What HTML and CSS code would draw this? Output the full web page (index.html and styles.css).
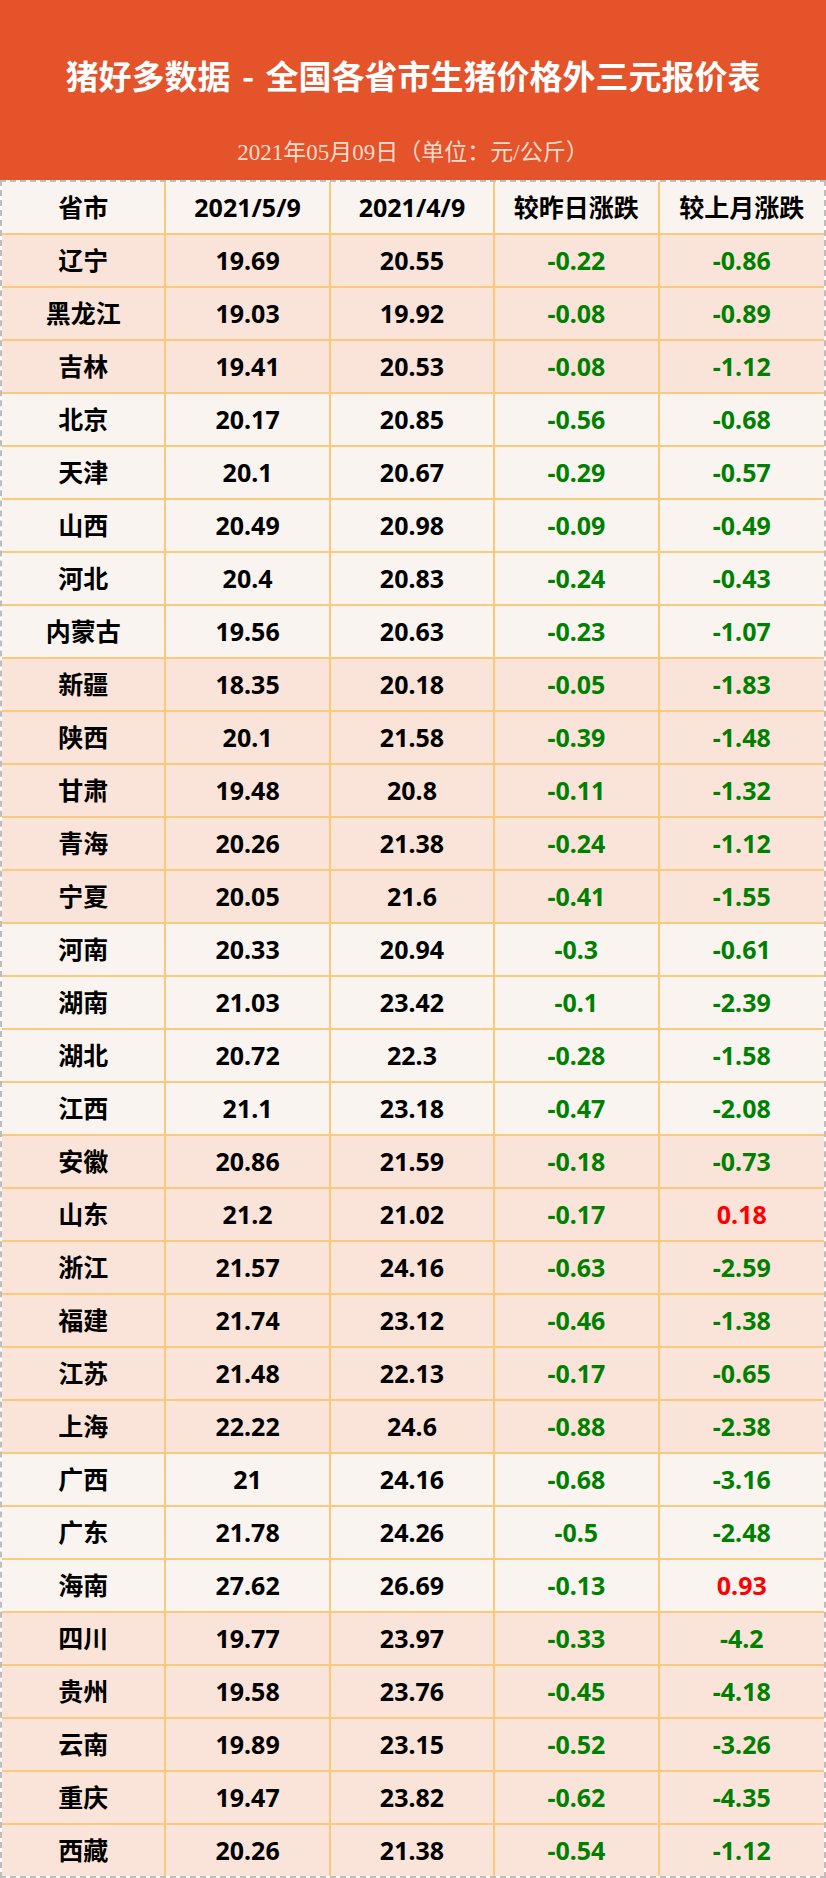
FILE: index.html
```html
<!DOCTYPE html>
<html lang="zh-CN">
<head>
<meta charset="utf-8">
<title>猪好多数据 - 全国各省市生猪价格外三元报价表</title>
<link rel="stylesheet" href="styles.css">
</head>
<body>
<header class="banner">
  <h1 class="title">猪好多数据 - 全国各省市生猪价格外三元报价表</h1>
  <p class="subtitle">2021年05月09日（单位：元/公斤）</p>
</header>
<table class="prices">
  <colgroup><col><col><col><col><col></colgroup>
  <thead>
    <tr class="light"><th>省市</th><th>2021/5/9</th><th>2021/4/9</th><th>较昨日涨跌</th><th>较上月涨跌</th></tr>
  </thead>
  <tbody>
    <tr class="peach"><td>辽宁</td><td>19.69</td><td>20.55</td><td class="down">-0.22</td><td class="down">-0.86</td></tr>
    <tr class="peach"><td>黑龙江</td><td>19.03</td><td>19.92</td><td class="down">-0.08</td><td class="down">-0.89</td></tr>
    <tr class="peach"><td>吉林</td><td>19.41</td><td>20.53</td><td class="down">-0.08</td><td class="down">-1.12</td></tr>
    <tr class="light"><td>北京</td><td>20.17</td><td>20.85</td><td class="down">-0.56</td><td class="down">-0.68</td></tr>
    <tr class="light"><td>天津</td><td>20.1</td><td>20.67</td><td class="down">-0.29</td><td class="down">-0.57</td></tr>
    <tr class="light"><td>山西</td><td>20.49</td><td>20.98</td><td class="down">-0.09</td><td class="down">-0.49</td></tr>
    <tr class="light"><td>河北</td><td>20.4</td><td>20.83</td><td class="down">-0.24</td><td class="down">-0.43</td></tr>
    <tr class="light"><td>内蒙古</td><td>19.56</td><td>20.63</td><td class="down">-0.23</td><td class="down">-1.07</td></tr>
    <tr class="peach"><td>新疆</td><td>18.35</td><td>20.18</td><td class="down">-0.05</td><td class="down">-1.83</td></tr>
    <tr class="peach"><td>陕西</td><td>20.1</td><td>21.58</td><td class="down">-0.39</td><td class="down">-1.48</td></tr>
    <tr class="peach"><td>甘肃</td><td>19.48</td><td>20.8</td><td class="down">-0.11</td><td class="down">-1.32</td></tr>
    <tr class="peach"><td>青海</td><td>20.26</td><td>21.38</td><td class="down">-0.24</td><td class="down">-1.12</td></tr>
    <tr class="peach"><td>宁夏</td><td>20.05</td><td>21.6</td><td class="down">-0.41</td><td class="down">-1.55</td></tr>
    <tr class="light"><td>河南</td><td>20.33</td><td>20.94</td><td class="down">-0.3</td><td class="down">-0.61</td></tr>
    <tr class="light"><td>湖南</td><td>21.03</td><td>23.42</td><td class="down">-0.1</td><td class="down">-2.39</td></tr>
    <tr class="light"><td>湖北</td><td>20.72</td><td>22.3</td><td class="down">-0.28</td><td class="down">-1.58</td></tr>
    <tr class="light"><td>江西</td><td>21.1</td><td>23.18</td><td class="down">-0.47</td><td class="down">-2.08</td></tr>
    <tr class="peach"><td>安徽</td><td>20.86</td><td>21.59</td><td class="down">-0.18</td><td class="down">-0.73</td></tr>
    <tr class="peach"><td>山东</td><td>21.2</td><td>21.02</td><td class="down">-0.17</td><td class="up">0.18</td></tr>
    <tr class="peach"><td>浙江</td><td>21.57</td><td>24.16</td><td class="down">-0.63</td><td class="down">-2.59</td></tr>
    <tr class="peach"><td>福建</td><td>21.74</td><td>23.12</td><td class="down">-0.46</td><td class="down">-1.38</td></tr>
    <tr class="peach"><td>江苏</td><td>21.48</td><td>22.13</td><td class="down">-0.17</td><td class="down">-0.65</td></tr>
    <tr class="peach"><td>上海</td><td>22.22</td><td>24.6</td><td class="down">-0.88</td><td class="down">-2.38</td></tr>
    <tr class="light"><td>广西</td><td>21</td><td>24.16</td><td class="down">-0.68</td><td class="down">-3.16</td></tr>
    <tr class="light"><td>广东</td><td>21.78</td><td>24.26</td><td class="down">-0.5</td><td class="down">-2.48</td></tr>
    <tr class="light"><td>海南</td><td>27.62</td><td>26.69</td><td class="down">-0.13</td><td class="up">0.93</td></tr>
    <tr class="peach"><td>四川</td><td>19.77</td><td>23.97</td><td class="down">-0.33</td><td class="down">-4.2</td></tr>
    <tr class="peach"><td>贵州</td><td>19.58</td><td>23.76</td><td class="down">-0.45</td><td class="down">-4.18</td></tr>
    <tr class="peach"><td>云南</td><td>19.89</td><td>23.15</td><td class="down">-0.52</td><td class="down">-3.26</td></tr>
    <tr class="peach"><td>重庆</td><td>19.47</td><td>23.82</td><td class="down">-0.62</td><td class="down">-4.35</td></tr>
    <tr class="peach"><td>西藏</td><td>20.26</td><td>21.38</td><td class="down">-0.54</td><td class="down">-1.12</td></tr>
  </tbody>
</table>
</body>
</html>
```

FILE: styles.css
```css
html, body {
  margin: 0;
  padding: 0;
  background: #ffffff;
}

body {
  width: 826px;
  font-family: "Noto Sans", "Noto Sans CJK SC", sans-serif;
}

.banner {
  height: 180px;
  box-sizing: border-box;
  background: #e4532a;
  display: flex;
  flex-direction: column;
  align-items: center;
  padding-top: 53px;
}

.title {
  margin: 0;
  font-family: "Noto Sans CJK SC", sans-serif;
  font-size: 33px;
  font-weight: 700;
  line-height: 44px;
  color: #ffffff;
  white-space: nowrap;
  word-spacing: 4px;
}

.subtitle {
  margin: 41px 0 0;
  font-family: "Liberation Serif", "Noto Sans CJK SC", serif;
  font-size: 23px;
  line-height: 30px;
  color: #f9dccb;
  white-space: nowrap;
}

.prices {
  width: 826px;
  table-layout: fixed;
  border-collapse: separate;
  border-spacing: 0;
  border: 2px dashed #bdbdbd;
  box-sizing: border-box;
}

.prices th,
.prices td {
  height: 51px;
  padding: 0;
  box-sizing: content-box;
  text-align: center;
  vertical-align: middle;
  font-size: 25px;
  font-weight: 700;
  color: #000000;
  line-height: 1;
  border-right: 2px solid #fbc97c;
  border-bottom: 2px solid #fbc97c;
}

.prices th:last-child,
.prices td:last-child {
  border-right: none;
}

.prices tbody tr:last-child td {
  border-bottom: none;
}

.light {
  background: #f9f4f0;
}

.peach {
  background: #fae4d9;
}

.prices .down {
  color: #008000;
}

.prices .up {
  color: #ff0000;
}
```
